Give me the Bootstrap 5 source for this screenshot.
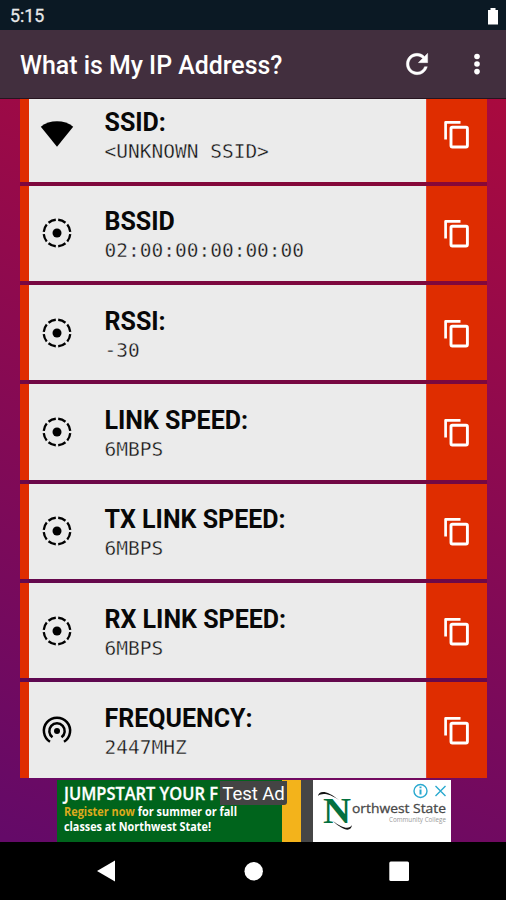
<!DOCTYPE html>
<html lang="en">
<head>
<meta charset="utf-8">
<meta name="viewport" content="width=device-width, initial-scale=1">
<title>What is My IP Address?</title>
<link href="https://cdn.jsdelivr.net/npm/bootstrap@5.3.0/dist/css/bootstrap.min.css" rel="stylesheet">
<style>
  body { font-family: Roboto, "Liberation Sans", sans-serif; }
  .screen { height: 900px; background: linear-gradient(198deg, #aa0a3e 8%, #640a68 94%); }
  .status { height: 30px; background: #0b1924; padding: 3px 7px 0 10px; font-size: 17.8px; color: #e8e8e8; -webkit-text-stroke: .3px #e8e8e8; }
  .appbar { height: 69px; background: #422f3e; padding: 0 24px 0 20px; border-bottom: 1px solid #26141f; }
  .appbar h1 { font-size: 24.9px; font-weight: 500; line-height: 1; margin-top: 4px; }
  .appbar .refresh { margin-right: 39px; }
  .rows { height: 679px; padding: 0 19px .4px 20px; gap: 4px; }
  .entry { height: 95.35px; background: #ebebeb; border-left: 9.5px solid #df2d00; box-shadow: 0 4px 0 rgba(0,0,0,.16); }
  .entry .glyph { width: 55px; }
  .entry .glyph svg { width: 34px; height: 34px; }
  .entry .texts { padding: 7px 0 0 20.5px; }
  .entry h2 { font-size: 25px; font-weight: 700; line-height: 28px; margin: 0; color: #080808; }
  .entry p { font-family: "DejaVu Sans Mono", monospace; font-size: 19.5px; line-height: 29px; margin: 0; color: #101010; -webkit-text-stroke: .35px #ebebeb; white-space: nowrap; }
  .copybtn { width: 61px; background: #df2d00; border-left: 1px solid #e8402c; padding: 1px 2px 0 0; }
  .ad { height: 64px; padding: 2px 55px 0 57px; }
  .ad-gold { width: 19px; background: #f3b31b; }
  .ad-grey { width: 12px; background: #464646; }
  .ad-tag { left: 163px; top: 1px; height: 24px; width: 67px; background: #444; color: #fff; font: 400 18.6px/26px Roboto, sans-serif; text-align: center; letter-spacing: -.1px; border-radius: 0 0 3px 0; white-space: nowrap; }
  .navkeys { height: 58px; background: #000; }
</style>
</head>
<body>
<svg class="d-none">
  <symbol id="copy" viewBox="0 0 31 31"><path d="M4.600 20.500V3.300H19.500" fill="none" stroke="#fff" stroke-width="2.700" stroke-linejoin="round"/><rect x="10" y="8.300" width="16.400" height="19.700" rx="1.400" fill="none" stroke="#fff" stroke-width="2.900"/></symbol>
  <symbol id="wifi" viewBox="0 0 34 34"><path d="M.8 9.700C9.500 2.400 24.500 2.400 33.200 9.700L17 29.700z"/></symbol>
  <symbol id="ring" viewBox="0 0 34 34"><circle cx="17" cy="17" r="4.500"/><circle cx="17" cy="17" r="13.300" fill="none" stroke="#000" stroke-width="2.300" pathLength="80" stroke-dasharray="7.600 2.400" stroke-dashoffset="-1.200"/></symbol>
  <symbol id="tether" viewBox="0 0 34 34"><circle cx="17" cy="18" r="3"/><path d="M12.500 24.300A7.700 7.700 0 1 1 21.500 24.300M10 28.800A13.100 13.100 0 1 1 24 28.800" fill="none" stroke="#000" stroke-width="2.500"/></symbol>
</svg>
<div class="screen d-flex flex-column overflow-hidden">
  <div class="status d-flex align-items-center justify-content-between flex-shrink-0">
    <span>5:15</span>
    <svg width="12" height="18" viewBox="0 0 12 18"><path d="M3.500 0h5v2H11v14.500H1V2h2.500z" fill="#fff"/></svg>
  </div>
  <nav class="appbar d-flex align-items-center flex-shrink-0">
    <h1 class="text-white mb-0 me-auto">What is My IP Address?</h1>
    <svg width="32" height="32" viewBox="0 0 24 24" fill="#fff" stroke="#fff" stroke-width=".3" class="refresh"><path d="M17.650 6.350C16.200 4.900 14.210 4 12 4c-4.420 0-7.990 3.580-7.990 8s3.570 8 7.990 8c3.730 0 6.840-2.550 7.730-6h-2.080c-.82 2.330-3.040 4-5.650 4-3.310 0-6-2.690-6-6s2.690-6 6-6c1.660 0 3.140.69 4.220 1.780L13 11h7V4l-2.350 2.350z"/></svg>
    <svg width="10" height="24" viewBox="0 0 10 24" fill="#fff"><circle cx="5" cy="4.500" r="2.800"/><circle cx="5" cy="12" r="2.800"/><circle cx="5" cy="19.600" r="2.800"/></svg>
  </nav>
  <main class="rows d-flex flex-column justify-content-end overflow-hidden flex-shrink-0">
    <div class="entry d-flex flex-shrink-0"><div class="glyph d-flex align-items-center justify-content-center"><svg><use href="#wifi"/></svg></div><div class="texts d-flex flex-column justify-content-center flex-grow-1"><h2>SSID:</h2><p>&lt;UNKNOWN SSID&gt;</p></div><div class="copybtn d-flex align-items-center justify-content-center"><svg width="31" height="31"><use href="#copy"/></svg></div></div>
    <div class="entry d-flex flex-shrink-0"><div class="glyph d-flex align-items-center justify-content-center"><svg><use href="#ring"/></svg></div><div class="texts d-flex flex-column justify-content-center flex-grow-1"><h2>BSSID</h2><p>02:00:00:00:00:00</p></div><div class="copybtn d-flex align-items-center justify-content-center"><svg width="31" height="31"><use href="#copy"/></svg></div></div>
    <div class="entry d-flex flex-shrink-0"><div class="glyph d-flex align-items-center justify-content-center"><svg><use href="#ring"/></svg></div><div class="texts d-flex flex-column justify-content-center flex-grow-1"><h2>RSSI:</h2><p>-30</p></div><div class="copybtn d-flex align-items-center justify-content-center"><svg width="31" height="31"><use href="#copy"/></svg></div></div>
    <div class="entry d-flex flex-shrink-0"><div class="glyph d-flex align-items-center justify-content-center"><svg><use href="#ring"/></svg></div><div class="texts d-flex flex-column justify-content-center flex-grow-1"><h2>LINK SPEED:</h2><p>6MBPS</p></div><div class="copybtn d-flex align-items-center justify-content-center"><svg width="31" height="31"><use href="#copy"/></svg></div></div>
    <div class="entry d-flex flex-shrink-0"><div class="glyph d-flex align-items-center justify-content-center"><svg><use href="#ring"/></svg></div><div class="texts d-flex flex-column justify-content-center flex-grow-1"><h2>TX LINK SPEED:</h2><p>6MBPS</p></div><div class="copybtn d-flex align-items-center justify-content-center"><svg width="31" height="31"><use href="#copy"/></svg></div></div>
    <div class="entry d-flex flex-shrink-0"><div class="glyph d-flex align-items-center justify-content-center"><svg><use href="#ring"/></svg></div><div class="texts d-flex flex-column justify-content-center flex-grow-1"><h2>RX LINK SPEED:</h2><p>6MBPS</p></div><div class="copybtn d-flex align-items-center justify-content-center"><svg width="31" height="31"><use href="#copy"/></svg></div></div>
    <div class="entry d-flex flex-shrink-0"><div class="glyph d-flex align-items-center justify-content-center"><svg><use href="#tether"/></svg></div><div class="texts d-flex flex-column justify-content-center flex-grow-1"><h2>FREQUENCY:</h2><p>2447MHZ</p></div><div class="copybtn d-flex align-items-center justify-content-center"><svg width="31" height="31"><use href="#copy"/></svg></div></div>
  </main>
  <div class="ad flex-shrink-0">
    <div class="d-flex h-100 position-relative overflow-hidden">
      <svg class="flex-shrink-0" width="225" height="62" viewBox="0 0 225 62" font-family="Open Sans, sans-serif" font-weight="700" fill="#fff">
        <rect width="225" height="62" fill="#00641c"/>
        <text x="7" y="20" font-size="18.500" font-weight="600" stroke="#fff" stroke-width=".3" textLength="154" lengthAdjust="spacingAndGlyphs">JUMPSTART YOUR F</text>
        <text x="7" y="35.500" font-size="11.500" textLength="173" lengthAdjust="spacingAndGlyphs"><tspan fill="#dcab1d">Register now</tspan> for summer or fall</text>
        <text x="7" y="50.500" font-size="11.500" textLength="147" lengthAdjust="spacingAndGlyphs">classes at Northwest State!</text>
      </svg>
      <div class="ad-gold"></div><div class="ad-grey"></div>
      <svg class="bg-white flex-grow-1" height="62" viewBox="0 0 138 62" font-family="Open Sans, sans-serif">
        <text x="10" y="43" font-family="Liberation Serif, serif" font-weight="700" font-size="36" textLength="28" lengthAdjust="spacingAndGlyphs" fill="#04703f">N</text>
        <path d="M5 16C6 10 14 10 26 20C15 13 9 13 5 16zM20 41C29 48 36 50 39 45C38 53 29 50 20 41z" fill="#151515"/>
        <text x="39" y="33" font-size="13.500" textLength="94" lengthAdjust="spacingAndGlyphs" fill="#484848" stroke="#484848" stroke-width=".3">orthwest State</text>
        <text x="76" y="42" font-size="7.200" textLength="57" lengthAdjust="spacingAndGlyphs" fill="#999">Community College</text>
        <g fill="none" stroke="#2aa9cf" stroke-width="1.400"><circle cx="107.500" cy="11" r="6.500"/><path d="M107.500 9.500v5M107.500 6.600v1.700" stroke-width="2"/><path d="M122.500 6L132.500 16M132.500 6L122.500 16"/></g>
      </svg>
      <div class="ad-tag position-absolute">Test Ad</div>
    </div>
  </div>
  <div class="navkeys d-flex flex-shrink-0">
    <svg width="506" height="58" viewBox="0 0 506 58" fill="#fff"><path d="M97 29L115 18.500V39.500z"/><circle cx="253.700" cy="29.200" r="9.200"/><rect x="389.300" y="19.500" width="19.700" height="19.500" rx="1.500"/></svg>
  </div>
</div>
<script src="https://cdn.jsdelivr.net/npm/bootstrap@5.3.0/dist/js/bootstrap.bundle.min.js"></script>
</body>
</html>
